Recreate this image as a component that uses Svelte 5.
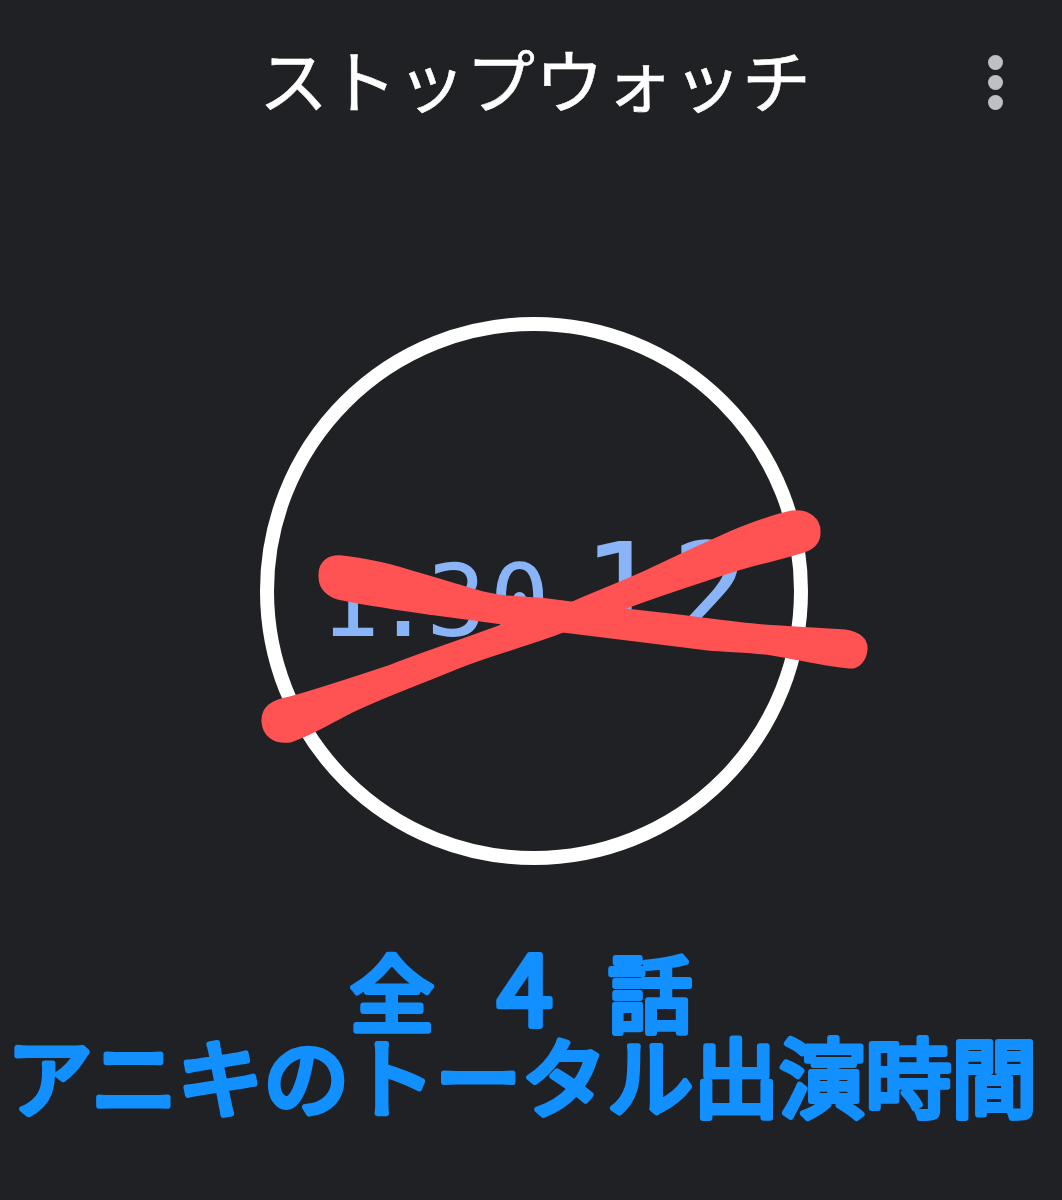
<script>
    let title = 'ストップウォッチ';
    // scribbled out by hand over the time
    let strokes = [
        'M321 577 C320 562 330 557 342 558 C360 560 375 563 391 567 C415 574 437 580 459 587 C475 592 490 597 507 598 C530 599 550 601 571 604 C600 608 625 611 652 614 C690 618 728 624 764 627 C790 629 820 630 845 632 C858 634 866 640 865 650 C864 660 857 667 849 666 C825 664 798 657 772 653 C752 650 730 650 708 648 C660 642 610 636 563 630 C525 625 488 620 451 615 C428 612 405 609 383 605 C368 603 352 600 338 597 C328 594 321 587 321 577 Z',
        'M264 722 C263 710 272 702 290 699 C325 689 358 678 391 667 C435 650 480 636 523 619 C540 612 558 609 575 603 C600 592 627 582 652 570 C679 557 705 545 732 533 C752 525 772 517 792 513 C808 511 819 520 818 533 C818 542 812 547 804 550 C780 558 756 562 732 570 C693 583 654 595 616 610 C598 617 581 623 563 630 C525 645 488 653 451 669 C415 684 380 696 346 713 C327 723 309 734 290 740 C274 742 265 734 264 722 Z'
    ];
</script>

<div class="screen">
    <header class="bar">
        <span></span>
        <h1>{title}</h1>
        <div class="menu"><i></i><i></i><i></i></div>
    </header>

    <main class="dial">
        <div class="time">
            <span class="small">1<span class="colon">:</span>30</span>
            <span class="big">12</span>
        </div>
    </main>

    <svg class="caption" viewBox="0 0 1062 210">
        <text x="392" y="96">全</text>
        <text x="525" y="96" class="four">4</text>
        <text x="650" y="96">話</text>
        <text x="522" y="181" class="long">アニキのトータル出演時間</text>
    </svg>

    <svg class="scribble" viewBox="0 0 1062 1200" aria-hidden="true">
        {#each strokes as d}
            <path {d} />
        {/each}
    </svg>
</div>

<style>
    :global(body) {
        background: #202124;
    }
    .screen {
        position: relative;
        width: 1062px;
        height: 1200px;
        background: #202124;
        overflow: hidden;
        font-family: "Noto Sans CJK JP", "Noto Sans", sans-serif;
    }
    .bar {
        display: grid;
        grid-template-columns: 1fr auto 1fr;
        align-items: center;
        height: 150px;
        padding: 0 59px 0 67px;
    }
    h1 {
        margin: 0;
        padding-top: 6px;
        color: #fff;
        font-size: 69px;
        font-weight: 400;
        line-height: 1;
        white-space: nowrap;
        -webkit-text-stroke: 0.6px #fff;
    }
    .menu {
        justify-self: end;
        margin-top: 14px;
        display: flex;
        flex-direction: column;
        gap: 5px;
    }
    .menu i {
        display: block;
        width: 15px;
        height: 15px;
        border-radius: 50%;
        background: #bdc1c6;
    }
    .dial {
        box-sizing: border-box;
        width: 548px;
        height: 548px;
        margin: 167px auto 0;
        position: relative;
        left: 3px;
        border: 14px solid #fff;
        border-radius: 50%;
        display: flex;
        align-items: center;
        justify-content: center;
    }
    .time {
        display: flex;
        align-items: baseline;
        gap: 29px;
        padding-left: 12px;
        color: #8ab4f8;
        font-family: "DejaVu Sans Mono", monospace;
        line-height: 1;
    }
    .small {
        font-size: 100px;
        letter-spacing: 3px;
    }
    .colon {
        margin: 0 -10px;
    }
    .big {
        font-size: 130px;
        letter-spacing: 11px;
    }
    .caption {
        display: block;
        width: 1062px;
        height: 210px;
        margin-top: 65px;
    }
    .caption text {
        fill: #1290ff;
        stroke: #1290ff;
        stroke-width: 6px;
        stroke-linejoin: round;
        stroke-linecap: round;
        font-size: 84px;
        font-weight: 400;
        text-anchor: middle;
    }
    .caption .four {
        font-size: 100px;
    }
    .caption .long {
        font-size: 86px;
    }
    .scribble {
        position: absolute;
        inset: 0;
        width: 100%;
        height: 100%;
        pointer-events: none;
    }
    .scribble path {
        fill: #ff5252;
        stroke: #ff5252;
        stroke-width: 5px;
        stroke-linejoin: round;
    }
</style>
